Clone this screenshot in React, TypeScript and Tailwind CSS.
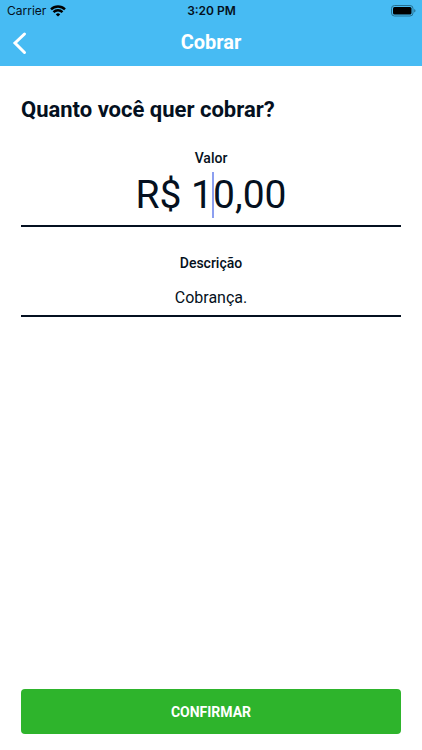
export default function App() {
  return (
    <div className="flex min-h-screen flex-col bg-white font-[Roboto,sans-serif] text-[#041020]">
      <header className="bg-[#47bbf3]">
        <div className="grid h-[22px] grid-cols-3 items-center pr-[6px] pl-[7px] font-[Inter,sans-serif] text-xs text-[#041020]">
          <div className="flex items-center gap-1">
            <span>Carrier</span>
            <svg className="h-3 w-4" viewBox="0 0 16 12" fill="none" stroke="#000" strokeWidth="2.4" aria-hidden="true">
              <path d="M1 4.4a10 10 0 0 1 14 0M3.5 7.1a6.4 6.4 0 0 1 9 0" />
              <path d="M8 11.6 5.8 9.4a3.2 3.2 0 0 1 4.4 0Z" fill="#000" stroke="none" />
            </svg>
          </div>
          <span className="text-center font-semibold">3:20 PM</span>
          <svg className="h-3 w-[25px] justify-self-end" viewBox="0 0 25 12" aria-hidden="true">
            <rect x="0.5" y="0.5" width="21.5" height="10.5" rx="3" fill="none" stroke="#267091" />
            <rect x="2" y="2" width="18.5" height="7.5" rx="1.5" fill="#000" />
            <path d="M23.2 4v3.6q1.3-.6 1.3-1.8t-1.3-1.8Z" fill="#267091" />
          </svg>
        </div>
        <div className="grid h-11 grid-cols-[40px_1fr_40px] items-center pb-1 text-white">
          <button type="button" aria-label="Voltar" className="flex h-10 items-center pt-[2px] pl-3">
            <svg className="h-6 w-4" viewBox="0 0 16 24" fill="none" stroke="currentColor" strokeWidth="3" strokeLinecap="round" aria-hidden="true">
              <path d="M12.5 3 3 12l9.500 9.500" />
            </svg>
          </button>
          <h1 className="text-center text-xl font-bold">Cobrar</h1>
        </div>
      </header>
      <main className="flex grow flex-col px-[21px] pt-7 pb-4">
        <h2 className="text-[22px] leading-8 font-bold">Quanto você quer cobrar?</h2>
        <form className="flex grow flex-col">
          <label htmlFor="valor" className="mt-6 text-center text-sm leading-4 font-medium">Valor</label>
          <div className="relative mt-1 border-b-2 border-[#041020]">
            <input id="valor" defaultValue="R$ 10,00" className="h-[55px] w-full pb-1 text-center text-[39px] outline-none" />
            <span className="absolute top-[2px] left-1/2 ml-px h-[46px] w-[2px] bg-[#8c9ff0]" />
          </div>
          <label htmlFor="descricao" className="mt-7 text-center text-sm leading-4 font-medium">Descrição</label>
          <input id="descricao" defaultValue="Cobrança." className="mt-2 h-[38px] border-b-2 border-[#041020] text-center text-base outline-none" />
          <button type="button" className="mt-auto h-[45px] rounded bg-[#2eb42c] text-sm font-bold text-white">CONFIRMAR</button>
        </form>
      </main>
    </div>
  );
}
